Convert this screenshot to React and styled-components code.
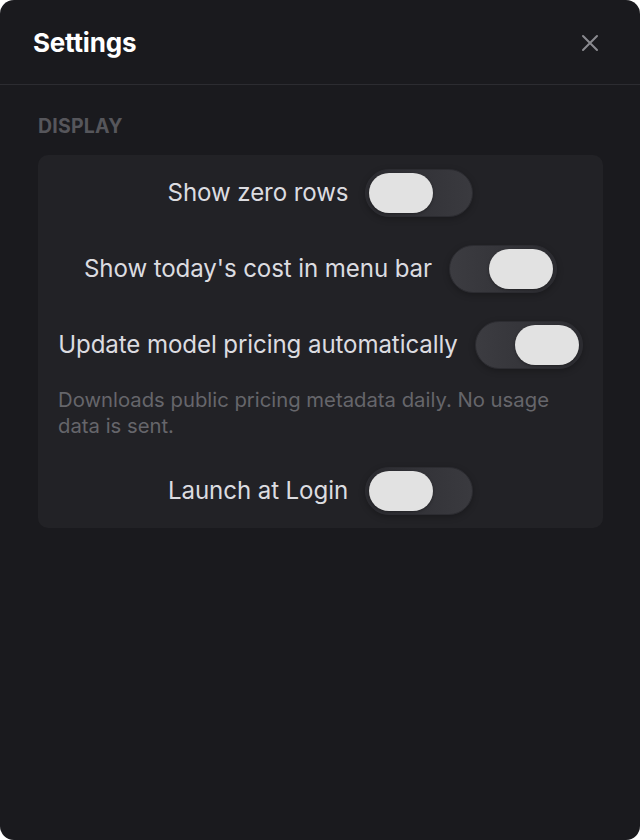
import { useState } from "react";
import styled, { createGlobalStyle } from "styled-components";

const GlobalStyle = createGlobalStyle`
  html, body {
    margin: 0;
    padding: 0;
    background: #ffffff;
  }
  body {
    font-family: Inter, "Noto Sans", sans-serif;
    -webkit-font-smoothing: antialiased;
  }
`;

const Window = styled.div`
  width: 640px;
  height: 840px;
  box-sizing: border-box;
  background: #1a1a1e;
  border-radius: 14px;
  overflow: hidden;
  display: flex;
  flex-direction: column;
`;

const Header = styled.div`
  height: 85px;
  box-sizing: border-box;
  display: flex;
  align-items: center;
  justify-content: space-between;
  padding: 1px 40px 0 33px;
  border-bottom: 1px solid #2c2c31;
`;

const Title = styled.h1`
  margin: 0;
  font-size: 26px;
  line-height: 30px;
  font-weight: 700;
  color: #ffffff;
  letter-spacing: -0.2px;
`;

const CloseButton = styled.button`
  border: none;
  background: none;
  padding: 0;
  width: 20px;
  height: 20px;
  display: flex;
  align-items: center;
  justify-content: center;
  cursor: pointer;
  color: #8a8a8f;
`;

const Body = styled.div`
  padding: 30px 37px 0 38px;
`;

const SectionTitle = styled.h2`
  margin: 0 0 18px;
  font-size: 19.5px;
  line-height: 22px;
  font-weight: 700;
  color: #56565b;
  letter-spacing: 0.2px;
  text-transform: uppercase;
`;

const Card = styled.div`
  background: #222226;
  border-radius: 10px;
  padding: 14px 20px 13px;
  display: flex;
  flex-direction: column;
  gap: 28px;
`;

const Row = styled.div`
  display: flex;
  align-items: center;
  justify-content: center;
  gap: 17px;
`;

const Label = styled.span`
  font-size: 24.1px;
  line-height: 28px;
  color: #dcdce0;
  letter-spacing: -0.1px;
`;

const Description = styled.p`
  margin: -10px 0 0;
  font-size: 20.3px;
  line-height: 26px;
  color: #66666b;
`;

const Track = styled.button`
  width: 108px;
  height: 48px;
  flex-shrink: 0;
  box-sizing: border-box;
  border-radius: 24px;
  border: 1px solid #2c2c31;
  padding: 3px;
  cursor: pointer;
  display: flex;
  justify-content: ${(p) => (p.on ? "flex-end" : "flex-start")};
  background: ${(p) =>
    p.on
      ? "linear-gradient(90deg, #3c3c41 0%, #333338 60%, #2d2d32 100%)"
      : "linear-gradient(90deg, #2b2b30 0%, #333338 50%, #3a3a3f 100%)"};
  box-shadow: 0 2px 6px rgba(0, 0, 0, 0.25);
`;

const Knob = styled.span`
  width: 64px;
  height: 40px;
  border-radius: 20px;
  background: #e2e2e2;
  box-shadow: 0 1px 3px rgba(0, 0, 0, 0.35);
`;

const Toggle = ({ on, onClick }) => (
  <Track on={on ? 1 : 0} onClick={onClick}>
    <Knob />
  </Track>
);

const CloseIcon = () => (
  <svg width="18" height="18" viewBox="0 0 18 18" fill="none">
    <path
      d="M2 2L16 16M16 2L2 16"
      stroke="currentColor"
      strokeWidth="2"
      strokeLinecap="round"
    />
  </svg>
);

export default function App() {
  const [settings, setSettings] = useState({
    zeroRows: false,
    costInMenu: true,
    autoPricing: true,
    launchAtLogin: false,
  });

  const flip = (key) => setSettings((s) => ({ ...s, [key]: !s[key] }));

  return (
    <>
      <GlobalStyle />
      <Window>
        <Header>
          <Title>Settings</Title>
          <CloseButton aria-label="Close">
            <CloseIcon />
          </CloseButton>
        </Header>
        <Body>
          <SectionTitle>Display</SectionTitle>
          <Card>
            <Row>
              <Label>Show zero rows</Label>
              <Toggle on={settings.zeroRows} onClick={() => flip("zeroRows")} />
            </Row>
            <Row>
              <Label>Show today's cost in menu bar</Label>
              <Toggle on={settings.costInMenu} onClick={() => flip("costInMenu")} />
            </Row>
            <Row>
              <Label>Update model pricing automatically</Label>
              <Toggle on={settings.autoPricing} onClick={() => flip("autoPricing")} />
            </Row>
            <Description>
              Downloads public pricing metadata daily. No usage data is sent.
            </Description>
            <Row>
              <Label>Launch at Login</Label>
              <Toggle on={settings.launchAtLogin} onClick={() => flip("launchAtLogin")} />
            </Row>
          </Card>
        </Body>
      </Window>
    </>
  );
}
